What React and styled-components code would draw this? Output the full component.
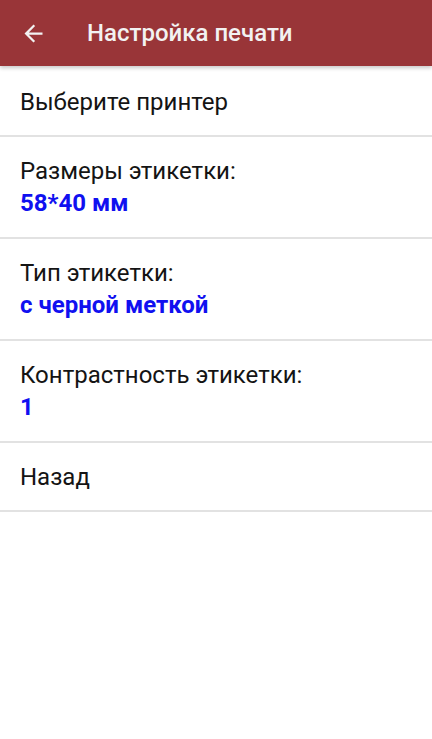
import React from "react";
import styled, { createGlobalStyle } from "styled-components";

const GlobalStyle = createGlobalStyle`
  html, body {
    margin: 0;
    padding: 0;
    background: #ffffff;
  }
  body {
    font-family: Roboto, "Noto Sans", sans-serif;
  }
`;

const Screen = styled.div`
  width: 432px;
  min-height: 739px;
  background: #ffffff;
`;

const Toolbar = styled.header`
  height: 66px;
  background-color: #993538;
  display: flex;
  align-items: center;
  box-shadow: 0px 2px 4px rgba(0, 0, 0, 0.22);
  position: relative;
  z-index: 1;
`;

const BackButton = styled.button`
  width: 27px;
  height: 27px;
  margin-left: 20px;
  padding: 0;
  border: 0;
  background: transparent;
  display: flex;
  color: #f2f2f2;
`;

const Title = styled.h1`
  margin: 0 0 0 40px;
  font-size: 24px;
  font-weight: 500;
  color: #f2f2f2;
`;

const List = styled.div`
  display: flex;
  flex-direction: column;
  padding-top: 2px;
`;

const Item = styled.div`
  height: ${(props) => (props.twoLine ? "100px" : "67px")};
  border-bottom: 2px solid #e2e2e2;
  padding: 0 20px;
  display: flex;
  flex-direction: column;
  justify-content: center;
  box-sizing: content-box;
`;

const Label = styled.div`
  font-size: 24px;
  color: #141414;
  line-height: 32px;
`;

const Value = styled.div`
  font-size: 24px;
  font-weight: 700;
  color: #1010f0;
  line-height: 32px;
`;

const items = [
  { label: "Выберите принтер" },
  { label: "Размеры этикетки:", value: "58*40 мм" },
  { label: "Тип этикетки:", value: "с черной меткой" },
  { label: "Контрастность этикетки:", value: "1" },
  { label: "Назад" },
];

export default function App() {
  return (
    <>
      <GlobalStyle />
      <Screen>
        <Toolbar>
          <BackButton aria-label="Назад">
            <svg width="27" height="27" viewBox="0 0 24 24" fill="currentColor">
              <path d="M20 11H7.83l5.59-5.59L12 4l-8 8 8 8 1.41-1.41L7.83 13H20v-2z" />
            </svg>
          </BackButton>
          <Title>Настройка печати</Title>
        </Toolbar>
        <List>
          {items.map((item) => (
            <Item key={item.label} twoLine={!!item.value}>
              <Label>{item.label}</Label>
              {item.value && <Value>{item.value}</Value>}
            </Item>
          ))}
        </List>
      </Screen>
    </>
  );
}
